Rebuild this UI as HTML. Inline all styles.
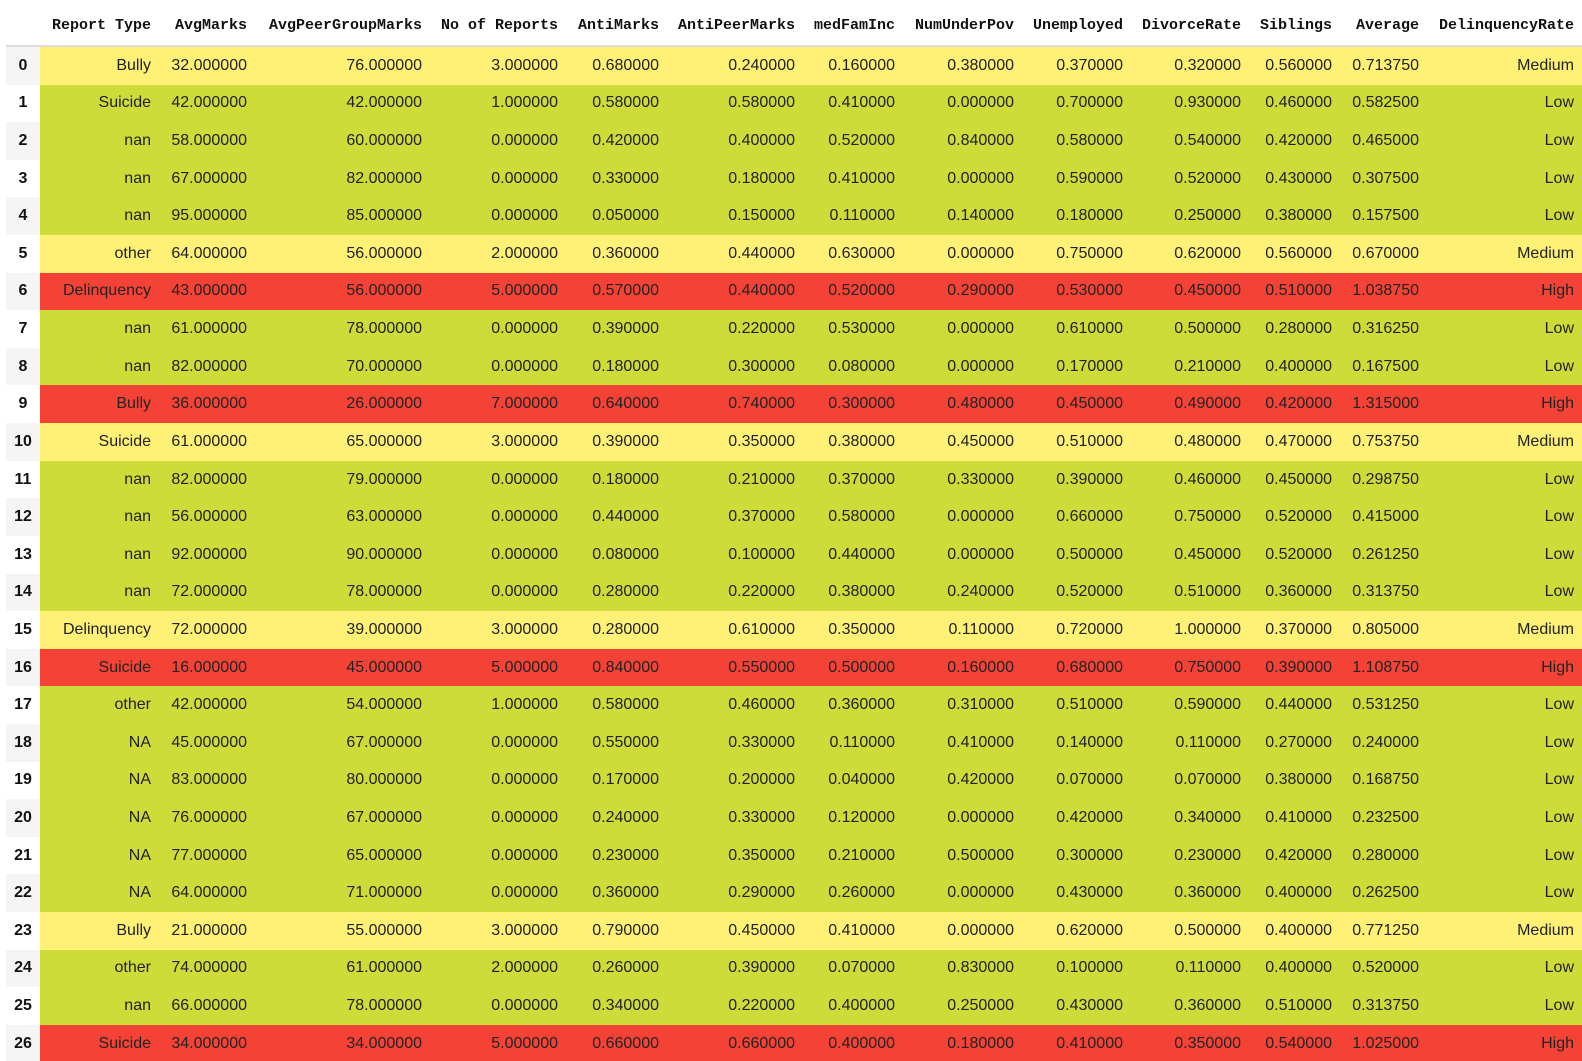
<!DOCTYPE html>
<html><head><meta charset="utf-8"><style>
html,body{margin:0;padding:0;background:#fff;width:1582px;height:1061px;overflow:hidden}
body{position:relative}
table{position:absolute;left:6px;top:0;width:1576px;min-width:1576px;border-collapse:collapse;table-layout:fixed;font-family:"Liberation Sans",sans-serif;font-size:16px;color:#222}
th{font-family:"Liberation Mono",monospace;font-size:15px;font-weight:bold;color:#111;text-align:right;padding:0 8px 0 0;height:46px;border-bottom:2px solid #ddd;box-sizing:border-box;white-space:nowrap;padding-top:6px;overflow:visible}
td{text-align:right;padding:0 8px 0 0;height:37.62px;white-space:nowrap}
td.i{text-align:center;padding:0;font-weight:bold;color:#111;background:#f5f5f5}
tr.y td{background:#fff176}tr.g td{background:#cddc39}tr.r td{background:#f44336}
tr td.i{background:#f5f5f5}
tbody tr:nth-child(even) td.i{background:#fff}
</style></head><body>
<table>
<colgroup><col style="width:34px"><col style="width:119px"><col style="width:96px"><col style="width:175px"><col style="width:136px"><col style="width:101px"><col style="width:136px"><col style="width:100px"><col style="width:119px"><col style="width:109px"><col style="width:118px"><col style="width:91px"><col style="width:87px"><col style="width:155px"></colgroup>
<thead><tr><th></th><th>Report Type</th><th>AvgMarks</th><th>AvgPeerGroupMarks</th><th>No of Reports</th><th>AntiMarks</th><th>AntiPeerMarks</th><th>medFamInc</th><th>NumUnderPov</th><th>Unemployed</th><th>DivorceRate</th><th>Siblings</th><th>Average</th><th>DelinquencyRate</th></tr></thead>
<tbody>
<tr class="y"><td class="i">0</td><td>Bully</td><td>32.000000</td><td>76.000000</td><td>3.000000</td><td>0.680000</td><td>0.240000</td><td>0.160000</td><td>0.380000</td><td>0.370000</td><td>0.320000</td><td>0.560000</td><td>0.713750</td><td>Medium</td></tr>
<tr class="g"><td class="i">1</td><td>Suicide</td><td>42.000000</td><td>42.000000</td><td>1.000000</td><td>0.580000</td><td>0.580000</td><td>0.410000</td><td>0.000000</td><td>0.700000</td><td>0.930000</td><td>0.460000</td><td>0.582500</td><td>Low</td></tr>
<tr class="g"><td class="i">2</td><td>nan</td><td>58.000000</td><td>60.000000</td><td>0.000000</td><td>0.420000</td><td>0.400000</td><td>0.520000</td><td>0.840000</td><td>0.580000</td><td>0.540000</td><td>0.420000</td><td>0.465000</td><td>Low</td></tr>
<tr class="g"><td class="i">3</td><td>nan</td><td>67.000000</td><td>82.000000</td><td>0.000000</td><td>0.330000</td><td>0.180000</td><td>0.410000</td><td>0.000000</td><td>0.590000</td><td>0.520000</td><td>0.430000</td><td>0.307500</td><td>Low</td></tr>
<tr class="g"><td class="i">4</td><td>nan</td><td>95.000000</td><td>85.000000</td><td>0.000000</td><td>0.050000</td><td>0.150000</td><td>0.110000</td><td>0.140000</td><td>0.180000</td><td>0.250000</td><td>0.380000</td><td>0.157500</td><td>Low</td></tr>
<tr class="y"><td class="i">5</td><td>other</td><td>64.000000</td><td>56.000000</td><td>2.000000</td><td>0.360000</td><td>0.440000</td><td>0.630000</td><td>0.000000</td><td>0.750000</td><td>0.620000</td><td>0.560000</td><td>0.670000</td><td>Medium</td></tr>
<tr class="r"><td class="i">6</td><td>Delinquency</td><td>43.000000</td><td>56.000000</td><td>5.000000</td><td>0.570000</td><td>0.440000</td><td>0.520000</td><td>0.290000</td><td>0.530000</td><td>0.450000</td><td>0.510000</td><td>1.038750</td><td>High</td></tr>
<tr class="g"><td class="i">7</td><td>nan</td><td>61.000000</td><td>78.000000</td><td>0.000000</td><td>0.390000</td><td>0.220000</td><td>0.530000</td><td>0.000000</td><td>0.610000</td><td>0.500000</td><td>0.280000</td><td>0.316250</td><td>Low</td></tr>
<tr class="g"><td class="i">8</td><td>nan</td><td>82.000000</td><td>70.000000</td><td>0.000000</td><td>0.180000</td><td>0.300000</td><td>0.080000</td><td>0.000000</td><td>0.170000</td><td>0.210000</td><td>0.400000</td><td>0.167500</td><td>Low</td></tr>
<tr class="r"><td class="i">9</td><td>Bully</td><td>36.000000</td><td>26.000000</td><td>7.000000</td><td>0.640000</td><td>0.740000</td><td>0.300000</td><td>0.480000</td><td>0.450000</td><td>0.490000</td><td>0.420000</td><td>1.315000</td><td>High</td></tr>
<tr class="y"><td class="i">10</td><td>Suicide</td><td>61.000000</td><td>65.000000</td><td>3.000000</td><td>0.390000</td><td>0.350000</td><td>0.380000</td><td>0.450000</td><td>0.510000</td><td>0.480000</td><td>0.470000</td><td>0.753750</td><td>Medium</td></tr>
<tr class="g"><td class="i">11</td><td>nan</td><td>82.000000</td><td>79.000000</td><td>0.000000</td><td>0.180000</td><td>0.210000</td><td>0.370000</td><td>0.330000</td><td>0.390000</td><td>0.460000</td><td>0.450000</td><td>0.298750</td><td>Low</td></tr>
<tr class="g"><td class="i">12</td><td>nan</td><td>56.000000</td><td>63.000000</td><td>0.000000</td><td>0.440000</td><td>0.370000</td><td>0.580000</td><td>0.000000</td><td>0.660000</td><td>0.750000</td><td>0.520000</td><td>0.415000</td><td>Low</td></tr>
<tr class="g"><td class="i">13</td><td>nan</td><td>92.000000</td><td>90.000000</td><td>0.000000</td><td>0.080000</td><td>0.100000</td><td>0.440000</td><td>0.000000</td><td>0.500000</td><td>0.450000</td><td>0.520000</td><td>0.261250</td><td>Low</td></tr>
<tr class="g"><td class="i">14</td><td>nan</td><td>72.000000</td><td>78.000000</td><td>0.000000</td><td>0.280000</td><td>0.220000</td><td>0.380000</td><td>0.240000</td><td>0.520000</td><td>0.510000</td><td>0.360000</td><td>0.313750</td><td>Low</td></tr>
<tr class="y"><td class="i">15</td><td>Delinquency</td><td>72.000000</td><td>39.000000</td><td>3.000000</td><td>0.280000</td><td>0.610000</td><td>0.350000</td><td>0.110000</td><td>0.720000</td><td>1.000000</td><td>0.370000</td><td>0.805000</td><td>Medium</td></tr>
<tr class="r"><td class="i">16</td><td>Suicide</td><td>16.000000</td><td>45.000000</td><td>5.000000</td><td>0.840000</td><td>0.550000</td><td>0.500000</td><td>0.160000</td><td>0.680000</td><td>0.750000</td><td>0.390000</td><td>1.108750</td><td>High</td></tr>
<tr class="g"><td class="i">17</td><td>other</td><td>42.000000</td><td>54.000000</td><td>1.000000</td><td>0.580000</td><td>0.460000</td><td>0.360000</td><td>0.310000</td><td>0.510000</td><td>0.590000</td><td>0.440000</td><td>0.531250</td><td>Low</td></tr>
<tr class="g"><td class="i">18</td><td>NA</td><td>45.000000</td><td>67.000000</td><td>0.000000</td><td>0.550000</td><td>0.330000</td><td>0.110000</td><td>0.410000</td><td>0.140000</td><td>0.110000</td><td>0.270000</td><td>0.240000</td><td>Low</td></tr>
<tr class="g"><td class="i">19</td><td>NA</td><td>83.000000</td><td>80.000000</td><td>0.000000</td><td>0.170000</td><td>0.200000</td><td>0.040000</td><td>0.420000</td><td>0.070000</td><td>0.070000</td><td>0.380000</td><td>0.168750</td><td>Low</td></tr>
<tr class="g"><td class="i">20</td><td>NA</td><td>76.000000</td><td>67.000000</td><td>0.000000</td><td>0.240000</td><td>0.330000</td><td>0.120000</td><td>0.000000</td><td>0.420000</td><td>0.340000</td><td>0.410000</td><td>0.232500</td><td>Low</td></tr>
<tr class="g"><td class="i">21</td><td>NA</td><td>77.000000</td><td>65.000000</td><td>0.000000</td><td>0.230000</td><td>0.350000</td><td>0.210000</td><td>0.500000</td><td>0.300000</td><td>0.230000</td><td>0.420000</td><td>0.280000</td><td>Low</td></tr>
<tr class="g"><td class="i">22</td><td>NA</td><td>64.000000</td><td>71.000000</td><td>0.000000</td><td>0.360000</td><td>0.290000</td><td>0.260000</td><td>0.000000</td><td>0.430000</td><td>0.360000</td><td>0.400000</td><td>0.262500</td><td>Low</td></tr>
<tr class="y"><td class="i">23</td><td>Bully</td><td>21.000000</td><td>55.000000</td><td>3.000000</td><td>0.790000</td><td>0.450000</td><td>0.410000</td><td>0.000000</td><td>0.620000</td><td>0.500000</td><td>0.400000</td><td>0.771250</td><td>Medium</td></tr>
<tr class="g"><td class="i">24</td><td>other</td><td>74.000000</td><td>61.000000</td><td>2.000000</td><td>0.260000</td><td>0.390000</td><td>0.070000</td><td>0.830000</td><td>0.100000</td><td>0.110000</td><td>0.400000</td><td>0.520000</td><td>Low</td></tr>
<tr class="g"><td class="i">25</td><td>nan</td><td>66.000000</td><td>78.000000</td><td>0.000000</td><td>0.340000</td><td>0.220000</td><td>0.400000</td><td>0.250000</td><td>0.430000</td><td>0.360000</td><td>0.510000</td><td>0.313750</td><td>Low</td></tr>
<tr class="r"><td class="i">26</td><td>Suicide</td><td>34.000000</td><td>34.000000</td><td>5.000000</td><td>0.660000</td><td>0.660000</td><td>0.400000</td><td>0.180000</td><td>0.410000</td><td>0.350000</td><td>0.540000</td><td>1.025000</td><td>High</td></tr>
</tbody></table>
</body></html>
